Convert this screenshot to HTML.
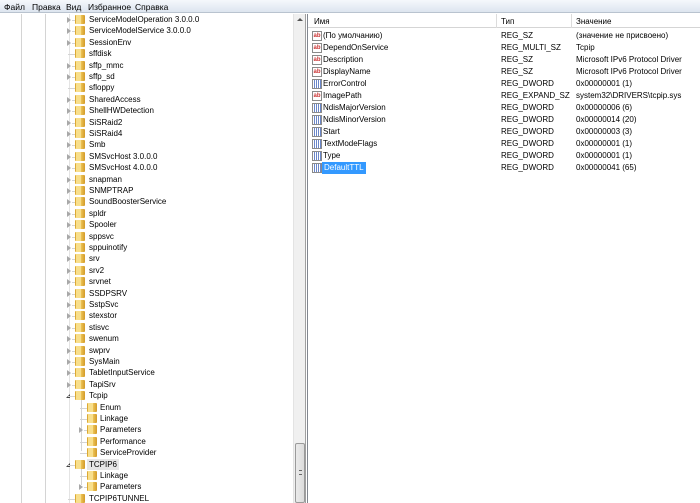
<!DOCTYPE html>
<html><head><meta charset="utf-8"><style>
*{margin:0;padding:0;box-sizing:border-box}
body{width:700px;height:503px;overflow:hidden;background:#fff;font-family:"Liberation Sans","DejaVu Sans",sans-serif;font-size:8px;color:#000;position:relative}
.menu{position:absolute;left:0;top:0;width:700px;height:13px;background:linear-gradient(#f5f8fc,#dde5ef);border-bottom:1px solid #b9c3cf}
.menu span{position:absolute;top:2px;font-size:8.5px}
.left{position:absolute;left:0;top:14px;width:306px;height:489px;border-right:1px solid #a0a0a0;overflow:hidden}
.vl{position:absolute;width:1px;background:#d4d4d4}
.r{position:absolute;height:11px;line-height:11px;white-space:nowrap}
.f{position:absolute;width:10px;height:9px;top:1px;background:linear-gradient(90deg,#d9a52e,#f3cf62 50%,#d39a28);border-radius:1px}
.f:before{content:"";position:absolute;left:1px;top:0;width:5px;height:9px;background:#f8df8c}
.ex{position:absolute;top:3px;width:0;height:0;border-left:4px solid #a8a8a8;border-top:3px solid transparent;border-bottom:3px solid transparent}
.exo{position:absolute;top:4px;width:0;height:0;border-right:4px solid #444;border-top:4px solid transparent}
.hl{position:absolute;height:1px;background:#d4d4d4;top:6px}
.sb{position:absolute;left:293px;top:0;width:12px;height:489px;background:#f0f0f0;border-left:1px solid #e3e3e3}
.thumb{position:absolute;left:1px;top:429px;width:10px;height:60px;background:linear-gradient(90deg,#eaeaea,#dcdcdc);border:1px solid #9a9a9a;border-radius:2px}
.right{position:absolute;left:307px;top:14px;width:393px;height:489px;border-left:1px solid #828790}
.hd{position:absolute;left:0;top:0;width:393px;height:14px;background:#fff;border-bottom:1px solid #d5d5d5}
.hd span{position:absolute;top:3px}
.sep{position:absolute;top:0;width:1px;height:14px;background:#dcdcdc}
.row{position:absolute;height:12px;line-height:12px;white-space:nowrap}
.ic{position:absolute;left:4px;top:1px;width:10px;height:10px;border:1px solid #8a8a8a;background:#fff;font-size:6px;line-height:8px;color:#c33;font-weight:bold;text-align:center}
.ic.d{color:#2a4f9a;background:repeating-linear-gradient(90deg,#fff 0 1px,#6a86c8 1px 2px)}
</style></head><body>
<div class="menu"><span style="left:4px">Файл</span><span style="left:32px">Правка</span><span style="left:66px">Вид</span><span style="left:88px">Избранное</span><span style="left:135px">Справка</span></div>
<div class="left">
<div class="vl" style="left:21px;top:0;height:489px"></div>
<div class="vl" style="left:45px;top:0;height:489px"></div>
<div class="vl" style="left:69px;top:0;height:489px;background:#e4e4e4"></div>
<div class="vl" style="left:81px;top:380px;height:57px"></div>
<div class="vl" style="left:81px;top:448px;height:23px"></div>
<div id="tree"></div>
<div class="sb"><div style="position:absolute;left:3px;top:4px;border-bottom:3px solid #555;border-left:3px solid transparent;border-right:3px solid transparent"></div><div class="thumb"><div style="position:absolute;left:3px;top:26px;width:3px;height:5px;border-top:1px solid #666;border-bottom:1px solid #666"></div></div></div>
</div>
<div class="right">
<div class="hd"><span style="left:6px">Имя</span><span style="left:193px">Тип</span><span style="left:268px">Значение</span><div class="sep" style="left:188px"></div><div class="sep" style="left:263px"></div></div>
<div id="vals"></div>
</div>
<script>
var items=[["ServiceModelOperation 3.0.0.0",0,1],["ServiceModelService 3.0.0.0",0,1],["SessionEnv",0,1],["sffdisk",0,0],["sffp_mmc",0,1],["sffp_sd",0,1],["sfloppy",0,0],["SharedAccess",0,1],["ShellHWDetection",0,1],["SiSRaid2",0,1],["SiSRaid4",0,1],["Smb",0,1],["SMSvcHost 3.0.0.0",0,1],["SMSvcHost 4.0.0.0",0,1],["snapman",0,1],["SNMPTRAP",0,1],["SoundBoosterService",0,1],["spldr",0,1],["Spooler",0,1],["sppsvc",0,1],["sppuinotify",0,1],["srv",0,1],["srv2",0,1],["srvnet",0,1],["SSDPSRV",0,1],["SstpSvc",0,1],["stexstor",0,1],["stisvc",0,1],["swenum",0,1],["swprv",0,1],["SysMain",0,1],["TabletInputService",0,1],["TapiSrv",0,1],["Tcpip",0,2],["Enum",1,0],["Linkage",1,0],["Parameters",1,1],["Performance",1,0],["ServiceProvider",1,0],["TCPIP6",0,2],["Linkage",1,0],["Parameters",1,1],["TCPIP6TUNNEL",0,0]];
var h="";
items.forEach(function(it,i){var y=(i*11.4).toFixed(1);var lv=it[1];var fx=lv?87:75,tx=lv?100:89,ex=lv?79:67;
h+='<div class="r" style="left:0;top:'+y+'px;width:290px">';
if(it[2]==1)h+='<div class="ex" style="left:'+ex+'px"></div>';
else if(it[2]==2)h+='<div class="exo" style="left:'+(ex-1)+'px"></div>';
h+='<div class="hl" style="left:'+(ex+(it[2]==1?5:1))+'px;width:'+(fx-ex-(it[2]==1?5:1))+'px"></div>';
h+='<div class="f" style="left:'+fx+'px"></div>';
var bg=(i==39)?'background:#e6e6e6;padding:0 2px;margin-left:-2px;':'';
h+='<span style="position:absolute;left:'+tx+'px;'+bg+'">'+it[0]+'</span></div>';});
document.getElementById('tree').innerHTML=h;
var v=[["(По умолчанию)","REG_SZ","(значение не присвоено)",0],["DependOnService","REG_MULTI_SZ","Tcpip",0],["Description","REG_SZ","Microsoft IPv6 Protocol Driver",0],["DisplayName","REG_SZ","Microsoft IPv6 Protocol Driver",0],["ErrorControl","REG_DWORD","0x00000001 (1)",1],["ImagePath","REG_EXPAND_SZ","system32\\DRIVERS\\tcpip.sys",0],["NdisMajorVersion","REG_DWORD","0x00000006 (6)",1],["NdisMinorVersion","REG_DWORD","0x00000014 (20)",1],["Start","REG_DWORD","0x00000003 (3)",1],["TextModeFlags","REG_DWORD","0x00000001 (1)",1],["Type","REG_DWORD","0x00000001 (1)",1],["DefaultTTL","REG_DWORD","0x00000041 (65)",1]];
h="";
v.forEach(function(r,i){var y=16+i*12;var sel=i==11;
h+='<div class="row" style="left:0;top:'+y+'px;width:393px"><div class="ic'+(r[3]?' d':'')+'">'+(r[3]?'':'ab')+'</div>';
h+='<span style="position:absolute;left:15px;'+(sel?'background:#3399ff;color:#fff;padding:0 2px;margin-left:-1px;':'')+'">'+r[0]+'</span>';
h+='<span style="position:absolute;left:193px">'+r[1]+'</span><span style="position:absolute;left:268px">'+r[2]+'</span></div>';});
document.getElementById('vals').innerHTML=h;
</script>
</body></html>
